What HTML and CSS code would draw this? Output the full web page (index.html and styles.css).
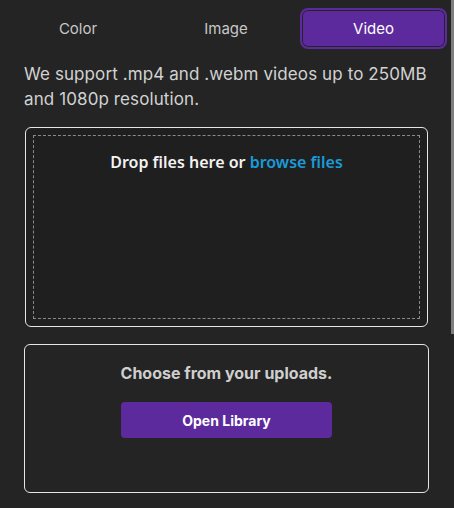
FILE: index.html
```html
<!DOCTYPE html>
<html lang="en">
<head>
  <meta charset="UTF-8">
  <meta name="viewport" content="width=device-width, initial-scale=1.0">
  <title>Background</title>
  <link rel="stylesheet" href="styles.css">
</head>
<body>
  <div class="Panel">
    <nav class="TabList">
      <button class="Tab">Color</button>
      <button class="Tab">Image</button>
      <button class="Tab active">Video</button>
    </nav>

    <p class="Hint">We support .mp4 and .webm videos up to 250MB and 1080p resolution.</p>

    <div class="DropZone">
      <div class="DropArea">
        <span class="DropText">Drop files here or <a href="#" class="BrowseLink">browse files</a></span>
      </div>
    </div>

    <div class="LibraryBox">
      <div class="LibraryTitle">Choose from your uploads.</div>
      <button class="OpenLibrary">Open Library</button>
    </div>
  </div>

  <div class="ScrollThumb"></div>
</body>
</html>
```

FILE: styles.css
```css
* {
  margin: 0;
  padding: 0;
  box-sizing: border-box;
}

body {
  font-family: 'Inter', sans-serif;
  background: #242424;
  color: #d0d0d0;
  min-height: 100vh;
  overflow: hidden;
}

/* Tabs */
.TabList {
  display: grid;
  grid-template-columns: repeat(3, 148px);
  padding: 8px 0 0 4px;
}

.Tab {
  height: 41px;
  font-family: 'Inter', sans-serif;
  font-size: 15px;
  color: #c8c8c8;
  background: transparent;
  border: 2px solid transparent;
  border-radius: 8px;
  cursor: pointer;
}

.Tab.active {
  width: 147px;
  color: #fff;
  background: #5d2a9e;
  border-color: #5d2a9e;
  box-shadow: inset 0 0 0 1px #242424;
}

/* Hint */
.Hint {
  margin: 13px 0 0;
  padding: 0 16px 0 24px;
  font-size: 17px;
  line-height: 25px;
  letter-spacing: 0.1px;
  color: #d2d2d2;
}

/* Drop zone */
.DropZone {
  width: 403px;
  height: 200px;
  margin: 15px 0 0 25px;
  padding: 7px;
  border: 1px solid #e6e6e6;
  border-radius: 6px;
  background: #1f1f1f;
}

.DropArea {
  height: 100%;
  border: 1px dashed #8a8a8a;
  padding-top: 15px;
  text-align: center;
}

.DropText {
  font-family: 'Noto Sans', sans-serif;
  font-weight: 600;
  font-size: 16px;
  line-height: 22px;
  color: #f2f2f2;
}

.BrowseLink {
  color: #1a9ad8;
  text-decoration: none;
}

/* Library */
.LibraryBox {
  width: 405px;
  height: 149px;
  margin: 17px 0 0 24px;
  padding-top: 18px;
  border: 1px solid #e6e6e6;
  border-radius: 6px;
  display: flex;
  flex-direction: column;
  align-items: center;
}

.LibraryTitle {
  font-weight: 700;
  font-size: 16px;
  line-height: 20px;
  color: #cfcfcf;
}

.OpenLibrary {
  margin-top: 19px;
  width: 211px;
  height: 36px;
  border: none;
  border-radius: 4px;
  background: #5d2a9e;
  color: #fff;
  font-family: 'Inter', sans-serif;
  font-weight: 700;
  font-size: 14px;
  cursor: pointer;
}

/* Scrollbar thumb overlay */
.ScrollThumb {
  position: absolute;
  top: 0;
  right: 0;
  width: 3px;
  height: 334px;
  background: #7e7e7e;
}
```
